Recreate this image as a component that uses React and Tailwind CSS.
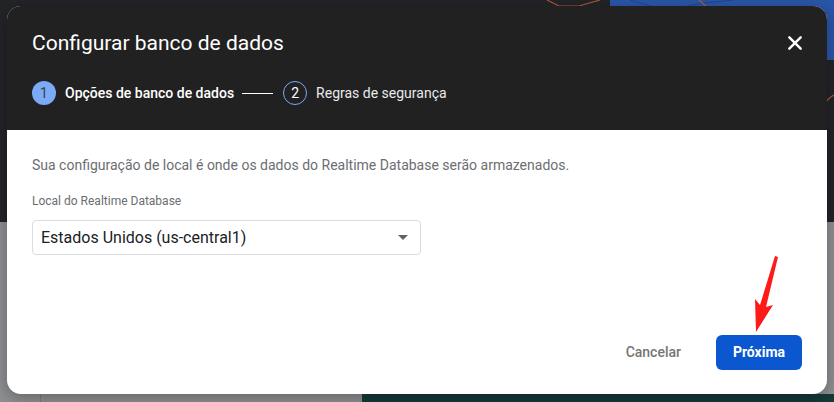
import React from "react";
import { IoClose } from "react-icons/io5";

const font = { fontFamily: "Roboto, 'Liberation Sans', sans-serif" };

const Step = ({ n, label, active }) => (
  <div className="flex items-center gap-[9px]">
    <div
      className={
        active
          ? "flex h-6 w-6 items-center justify-center rounded-full bg-[#7baaf7] text-[14px] text-[#3c4043]"
          : "flex h-6 w-6 items-center justify-center rounded-full border border-[#7baaf7] text-[14px] text-white"
      }
    >
      {n}
    </div>
    <span className={active ? "text-[14px] font-medium text-white" : "text-[14px] text-[#e8eaed]"}>
      {label}
    </span>
  </div>
);

export default function App() {
  return (
    <div className="relative h-[402px] w-[834px] overflow-hidden bg-[#8e8f92]" style={font}>
      {/* dimmed page behind the dialog */}
      <div className="flex h-full flex-col">
        <div className="relative h-[222px] bg-[#222428]">
          <svg className="absolute right-0 top-0" width="300" height="130" viewBox="0 0 300 130">
            <path d="M76 0 H300 V60 H292 V12 H76 Z" fill="#2a56a8" />
            <path d="M96 0 L130 10 L170 3 L200 0" stroke="#1f4690" strokeWidth="1" fill="none" />
            <path d="M13 0 L25 6 L45 6 L66 0" stroke="#b05a3a" strokeWidth="1.2" fill="none" />
            <path d="M165 0 L172 6" stroke="#b05a3a" strokeWidth="1.2" fill="none" />
            <path d="M300 95 A20 20 0 0 0 290 120" stroke="#b05a3a" strokeWidth="1.2" fill="none" />
          </svg>
        </div>
        <div className="flex flex-1">
          <div className="w-[41px] border-r border-[#7d7e81]" />
          <div className="w-[321px]" />
          <div className="flex-1 self-end h-[8px] bg-[#143a38]" />
        </div>
      </div>

      {/* dialog */}
      <div className="absolute left-[7px] top-[6px] flex h-[388px] w-[820px] flex-col overflow-hidden rounded-[14px] bg-white shadow-[0_4px_16px_rgba(0,0,0,0.3)]">
        <div className="h-[124px] bg-[#212121] px-[25px] pt-[23px]">
          <div className="flex items-center justify-between">
            <h1 className="text-[21px] leading-[28px] text-white">Configurar banco de dados</h1>
            <IoClose className="mr-[-6px] text-white" size={26} />
          </div>
          <div className="mt-[24px] flex items-center">
            <Step n="1" label="Opções de banco de dados" active />
            <div className="ml-[8px] mr-[10px] h-px w-[31px] bg-white" />
            <Step n="2" label="Regras de segurança" />
          </div>
        </div>

        <div className="flex flex-1 flex-col px-[25px] pt-[25px]">
          <p className="text-[14px] leading-5 text-[#6b6e72]">
            Sua configuração de local é onde os dados do Realtime Database serão armazenados.
          </p>
          <label className="mt-[18px] text-[12px] leading-4 text-[#6b6e72]">
            Local do Realtime Database
          </label>
          <div className="mt-[11px] flex h-[35px] w-[389px] items-center justify-between rounded-[4px] border border-[#dadce0] px-[8px]">
            <span className="text-[16px] text-[#202124]">Estados Unidos (us-central1)</span>
            <svg width="10" height="5" viewBox="0 0 10 5" className="mr-[4px]">
              <path d="M0 0 L10 0 L5 5 Z" fill="#5f6368" />
            </svg>
          </div>

          <div className="mt-auto mb-[24px] flex items-center justify-end gap-[35px]">
            <button className="text-[14px] font-medium text-[#757575]">Cancelar</button>
            <button className="h-[35px] w-[86px] rounded-[6px] bg-[#0b57d0] text-[14px] font-bold text-white">
              Próxima
            </button>
          </div>
        </div>
      </div>

      {/* red annotation arrow */}
      <svg className="absolute left-[745px] top-[255px]" width="40" height="80" viewBox="0 0 40 80">
        <path d="M33 2 L21 52 L28 50 L11 77 L10 44 L15 50 L30 1 Z" fill="#ff1a1a" />
      </svg>
    </div>
  );
}
